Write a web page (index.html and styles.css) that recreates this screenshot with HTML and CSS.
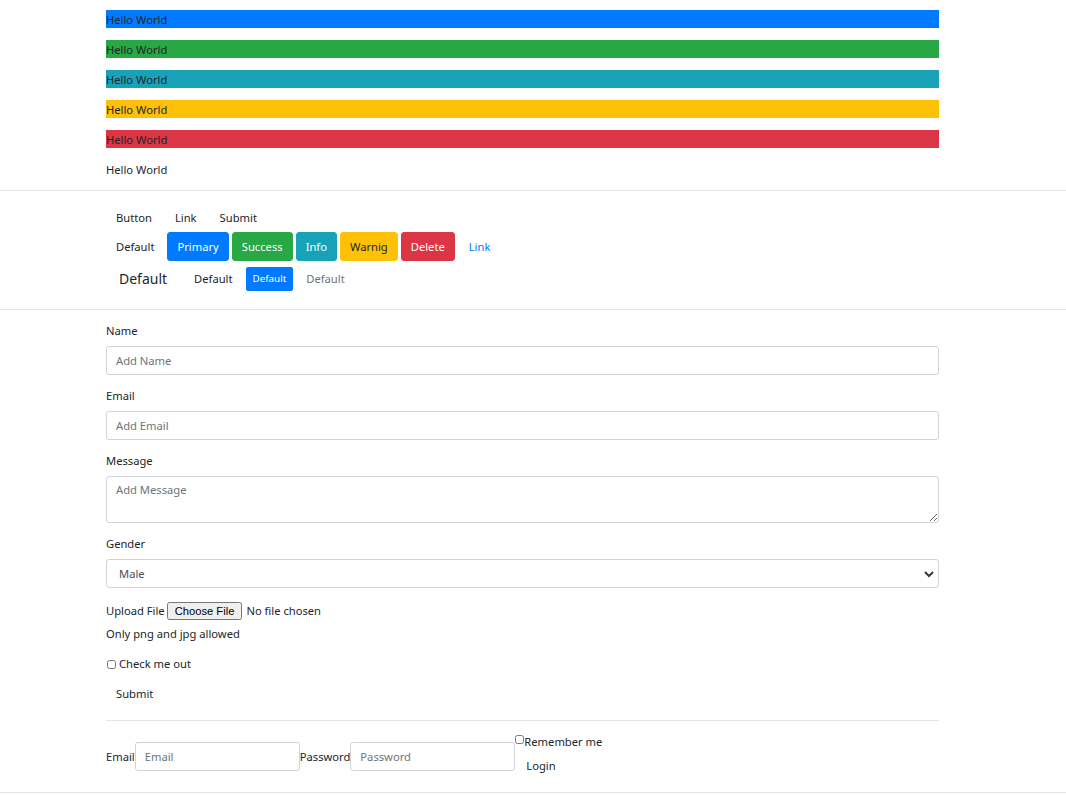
FILE: index.html
```html
<!DOCTYPE html>
<html>
<head>
<meta charset="utf-8">
<link rel="stylesheet" href="styles.css">
</head>
<body>
<div class="wrap">
  <p class="bar bg-primary">Hello World</p>
  <p class="bar bg-success">Hello World</p>
  <p class="bar bg-info">Hello World</p>
  <p class="bar bg-warning">Hello World</p>
  <p class="bar bg-danger">Hello World</p>
  <p class="bar">Hello World</p>
</div>
<hr class="rule">
<div class="wrap">
  <div class="btn-row">
    <button class="btn">Button</button>
    <button class="btn">Link</button>
    <button class="btn">Submit</button>
  </div>
  <div class="btn-row">
    <button class="btn">Default</button>
    <button class="btn btn-primary">Primary</button>
    <button class="btn btn-success">Success</button>
    <button class="btn btn-info">Info</button>
    <button class="btn btn-warning">Warnig</button>
    <button class="btn btn-danger">Delete</button>
    <button class="btn btn-link">Link</button>
  </div>
  <div class="btn-row row-sizes">
    <button class="btn btn-lg">Default</button>
    <button class="btn">Default</button>
    <button class="btn btn-sm btn-primary">Default</button>
    <button class="btn btn-disabled">Default</button>
  </div>
</div>
<hr class="rule">
<div class="wrap">
  <form class="form">
    <div class="group">
      <label class="label">Name</label>
      <input class="control" type="text" placeholder="Add Name">
    </div>
    <div class="group">
      <label class="label">Email</label>
      <input class="control" type="text" placeholder="Add Email">
    </div>
    <div class="group">
      <label class="label">Message</label>
      <textarea class="control area" rows="2" placeholder="Add Message"></textarea>
    </div>
    <div class="group">
      <label class="label">Gender</label>
      <div class="select-wrap">
        <select class="control select"><option>Male</option><option>Female</option></select>
        <svg class="chev" width="10" height="8" viewBox="0 0 10 8"><path d="M1 2 L5 6 L9 2" fill="none" stroke="#343a40" stroke-width="2"/></svg>
      </div>
    </div>
    <div class="file-row">
      <label class="inline-label">Upload File</label><input class="file" type="file">
    </div>
    <div class="help">Only png and jpg allowed</div>
    <div class="check-row">
      <label class="check"><input type="checkbox" class="box"> Check me out</label>
    </div>
    <div class="btn-row submit-row"><button class="btn" type="button">Submit</button></div>
  </form>
  <hr class="rule inner">
  <form class="inline-form">
    <label class="inline-label">Email</label><input class="control small" type="text" placeholder="Email">
    <label class="inline-label">Password</label><input class="control small" type="password" placeholder="Password">
    <div class="stack">
      <label class="check tight"><input type="checkbox" class="box">Remember me</label>
      <div class="btn-row"><button class="btn" type="button">Login</button></div>
    </div>
  </form>
</div>
<hr class="rule">
</body>
</html>
```
FILE: styles.css
```css
html, body {
  margin: 0;
  padding: 0;
  background: #fff;
}
body {
  font-family: "Noto Sans", "Open Sans", sans-serif;
  font-size: 11.2px;
  line-height: 18px;
  color: #212529;
  padding-top: 10px;
}
.wrap {
  margin-left: 106px;
  width: 833px;
}
.bar {
  margin: 0 0 12px 0;
  height: 18px;
  line-height: 19px;
}
.bg-primary { background: #007bff; }
.bg-success { background: #28a745; }
.bg-info { background: #17a2b8; }
.bg-warning { background: #ffc107; }
.bg-danger { background: #dc3545; }
.rule {
  border: 0;
  border-top: 1px solid #e5e5e5;
  margin: 0 0 12px 0;
  height: 0;
}
.rule.inner {
  margin: 0;
}
.btn-row {
  display: flex;
  align-items: center;
  gap: 3px;
}
.btn {
  font-family: inherit;
  font-size: 11.2px;
  line-height: 18px;
  padding: 4.5px 9px;
  border: 1px solid transparent;
  border-radius: 3px;
  background: transparent;
  color: #212529;
  cursor: pointer;
}
.btn-primary { background: #007bff; border-color: #007bff; color: #fff; }
.btn-success { background: #28a745; border-color: #28a745; color: #fff; }
.btn-info { background: #17a2b8; border-color: #17a2b8; color: #fff; }
.btn-warning { background: #ffc107; border-color: #ffc107; color: #212529; }
.btn-danger { background: #dc3545; border-color: #dc3545; color: #fff; }
.btn-link { color: #007bff; margin-left: 1px; }
.btn-lg {
  font-size: 14px;
  line-height: 22px;
  padding: 6px 12px;
  border-radius: 4px;
  margin-right: 1px;
}
.btn-sm {
  font-size: 9.8px;
  line-height: 15.75px;
  padding: 3px 6px;
  border-radius: 2px;
}
.btn-disabled {
  opacity: 0.65;
}
.row-sizes {
  margin-bottom: 12px;
}
.form {
  margin: 0;
}
.group {
  margin-bottom: 12px;
}
.label {
  display: block;
  margin-bottom: 6px;
}
.control {
  display: block;
  box-sizing: border-box;
  width: 100%;
  height: 29px;
  font-family: inherit;
  font-size: 11.2px;
  line-height: 18px;
  padding: 4px 9px;
  border: 1px solid #ced4da;
  border-radius: 3px;
  color: #495057;
  background: #fff;
}
.control::placeholder {
  color: #6c757d;
}
.area {
  height: 47px;
  resize: vertical;
}
.select-wrap {
  position: relative;
}
.select {
  appearance: none;
  -webkit-appearance: none;
  padding-left: 12px;
}
.chev {
  position: absolute;
  right: 5px;
  top: 11px;
}
.file-row {
  display: flex;
  align-items: center;
  height: 21px;
}
.inline-label {
  display: inline-block;
}
.file {
  font-family: inherit;
  font-size: 11.2px;
  margin-left: 2px;
}
.help {
  margin-top: 4px;
  line-height: 18px;
}
.check-row {
  margin-top: 12px;
  margin-bottom: 6px;
}
.check {
  display: flex;
  align-items: center;
  line-height: 18px;
}
.box {
  width: 9px;
  height: 9px;
  margin: 0 3px 0 1px;
}
.check.tight .box {
  margin: 0 0 5px 0;
}
.submit-row {
  margin-bottom: 12px;
}
.inline-form {
  display: flex;
  align-items: center;
  margin-top: 12px;
  margin-bottom: 12px;
}
.control.small {
  display: inline-block;
  width: 165px;
}
.stack {
  display: flex;
  flex-direction: column;
}
.stack .btn-row {
  margin-left: 1px;
}
```
